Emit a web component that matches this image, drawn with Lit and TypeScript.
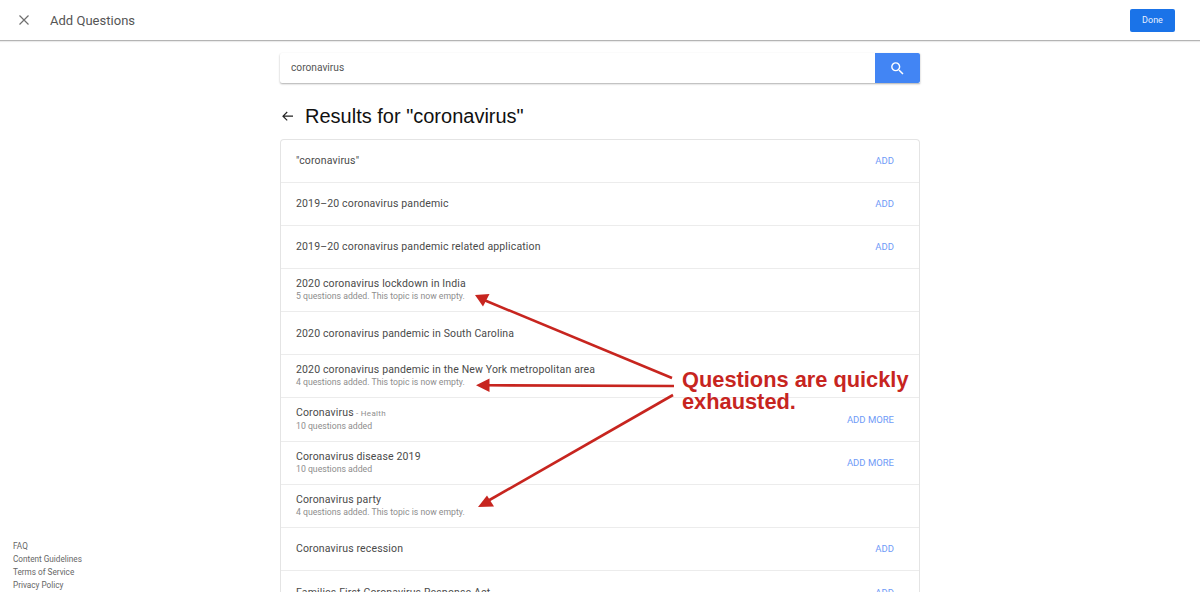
import { LitElement, html, css, svg } from "lit";
import { customElement } from "lit/decorators.js";

type Row = { title: string; tag?: string; sub?: string; action?: string };

const ROWS: Row[] = [
  { title: '"coronavirus"', action: "ADD" },
  { title: "2019–20 coronavirus pandemic", action: "ADD" },
  { title: "2019–20 coronavirus pandemic related application", action: "ADD" },
  { title: "2020 coronavirus lockdown in India", sub: "5 questions added. This topic is now empty." },
  { title: "2020 coronavirus pandemic in South Carolina" },
  { title: "2020 coronavirus pandemic in the New York metropolitan area", sub: "4 questions added. This topic is now empty." },
  { title: "Coronavirus", tag: "Health", sub: "10 questions added", action: "ADD MORE" },
  { title: "Coronavirus disease 2019", sub: "10 questions added", action: "ADD MORE" },
  { title: "Coronavirus party", sub: "4 questions added. This topic is now empty." },
  { title: "Coronavirus recession", action: "ADD" },
  { title: "Families First Coronavirus Response Act", action: "ADD" },
];

@customElement("app-root")
export class AppRoot extends LitElement {
  static styles = css`
    :host {
      display: block;
      position: relative;
      width: 1200px;
      height: 592px;
      overflow: hidden;
      background: #fff;
      font-family: Roboto, "Liberation Sans", sans-serif;
      color: #444;
    }
    .topbar {
      height: 40px;
      border-bottom: 1px solid #b4b4b4;
      box-shadow: 0 1px 1px rgba(0, 0, 0, 0.08);
      display: flex;
      align-items: center;
      padding: 0 25px 0 18px;
    }
    .close { width: 12px; height: 12px; display: block; }
    .topbar h1 {
      margin: 0 0 0 20px;
      font-size: 13px;
      font-weight: 400;
      letter-spacing: 0.02px;
      color: #555;
      flex: 1;
    }
    .done {
      width: 45px;
      height: 23px;
      border-radius: 2px;
      background: #1a73e8;
      color: #e6efff;
      font-size: 9px;
      display: flex;
      align-items: center;
      justify-content: center;
    }
    .body { display: flex; height: 551px; }
    .side {
      width: 280px;
      padding-left: 13px;
      box-sizing: border-box;
      display: flex;
      flex-direction: column;
      justify-content: flex-end;
      font-size: 8.2px;
      line-height: 13px;
      color: #666;
    }
    .main { width: 640px; padding-top: 12px; box-sizing: border-box; }
    .search {
      height: 30px;
      display: flex;
      background: #fff;
      box-shadow: 0 1px 2px rgba(0, 0, 0, 0.32);
      border-radius: 2px 0 0 2px;
    }
    .search .q {
      flex: 1;
      padding-left: 11px;
      font-size: 10.2px;
      line-height: 29px;
      color: #555;
    }
    .search .btn {
      width: 45px;
      background: #4285f4;
      display: flex;
      align-items: center;
      justify-content: center;
      border-radius: 0 2px 2px 0;
    }
    .heading {
      display: flex;
      align-items: center;
      height: 44.6px;
      padding-top: 11px;
    }
    .heading svg { width: 14px; height: 14px; margin-left: 1px; }
    .heading span {
      margin-left: 10px;
      font-size: 20px;
      color: #111;
      font-family: "Liberation Sans", Arial, sans-serif;
    }
    .card {
      border: 1px solid #e4e4e4;
      border-radius: 4px 4px 0 0;
      border-bottom: none;
    }
    .row {
      height: 43.15px;
      box-sizing: border-box;
      border-bottom: 1px solid #ececec;
      display: flex;
      align-items: center;
      padding: 0 25px 0 15px;
    }
    .text { flex: 1; min-width: 0; }
    .title {
      font-size: 10.5px;
      line-height: 13px;
      letter-spacing: 0.15px;
      color: #4a4a4a;
    }
    .tag { font-size: 8px; color: #8f8f8f; letter-spacing: 0.3px; }
    .sub {
      font-size: 8.7px;
      line-height: 13px;
      color: #8d8d8d;
    }
    .action { font-size: 9.5px; color: #6f9bf7; }
    .overlay {
      position: absolute;
      left: 0;
      top: 0;
      width: 1200px;
      height: 592px;
      pointer-events: none;
    }
    .note {
      position: absolute;
      left: 682px;
      top: 369px;
      font-family: "Liberation Sans", Arial, sans-serif;
      font-weight: 700;
      font-size: 21.8px;
      line-height: 22px;
      color: #c7251f;
      white-space: nowrap;
    }
  `;

  render() {
    return html`
      <div class="topbar">
        <svg class="close" viewBox="0 0 12 12" fill="none" stroke="#6f6f6f" stroke-width="1.2">
          <path d="M1.5 1.5 L10.5 10.5 M10.5 1.5 L1.5 10.5" />
        </svg>
        <h1>Add Questions</h1>
        <div class="done">Done</div>
      </div>
      <div class="body">
        <div class="side">
          <div>FAQ</div>
          <div>Content Guidelines</div>
          <div>Terms of Service</div>
          <div>Privacy Policy</div>
        </div>
        <div class="main">
          <div class="search">
            <div class="q">coronavirus</div>
            <div class="btn">
              <svg width="17" height="17" viewBox="0 0 24 24" fill="#fff">
                <path d="M15.5 14h-.79l-.28-.27A6.47 6.47 0 0 0 16 9.5 6.5 6.5 0 1 0 9.5 16c1.61 0 3.09-.59 4.23-1.57l.27.28v.79l5 4.99L20.49 19l-4.99-5zm-6 0C7.01 14 5 11.99 5 9.5S7.01 5 9.5 5 14 7.01 14 9.5 11.99 14 9.5 14z" />
              </svg>
            </div>
          </div>
          <div class="heading">
            <svg viewBox="0 0 14 14" fill="none" stroke="#222" stroke-width="1.2">
              <path d="M12 7.2 H2.2 M6.2 3 L2 7.2 L6.2 11.4" />
            </svg>
            <span>Results for "coronavirus"</span>
          </div>
          <div class="card">
            ${ROWS.map(
              (r) => html`
                <div class="row">
                  <div class="text">
                    <div class="title">
                      ${r.title}${r.tag ? html`<span class="tag"> - ${r.tag}</span>` : ""}
                    </div>
                    ${r.sub ? html`<div class="sub">${r.sub}</div>` : ""}
                  </div>
                  ${r.action ? html`<div class="action">${r.action}</div>` : ""}
                </div>
              `
            )}
          </div>
        </div>
      </div>
      <svg class="overlay" viewBox="0 0 1200 592">
        ${svg`
          <g stroke="#c7251f" stroke-width="2.6" fill="none">
            <path d="M672 378 L484 300" />
            <path d="M674 386 L486 385.3" />
            <path d="M673 395 L486 502" />
          </g>
          <g fill="#c7251f">
            <path d="M475 295 L489.5 294 L483 306.5 Z" />
            <path d="M476 385.3 L489.5 378.5 L489.5 392 Z" />
            <path d="M478 507 L487 495.5 L494 506.5 Z" />
          </g>
        `}
      </svg>
      <div class="note">Questions are quickly<br />exhausted.</div>
    `;
  }
}
